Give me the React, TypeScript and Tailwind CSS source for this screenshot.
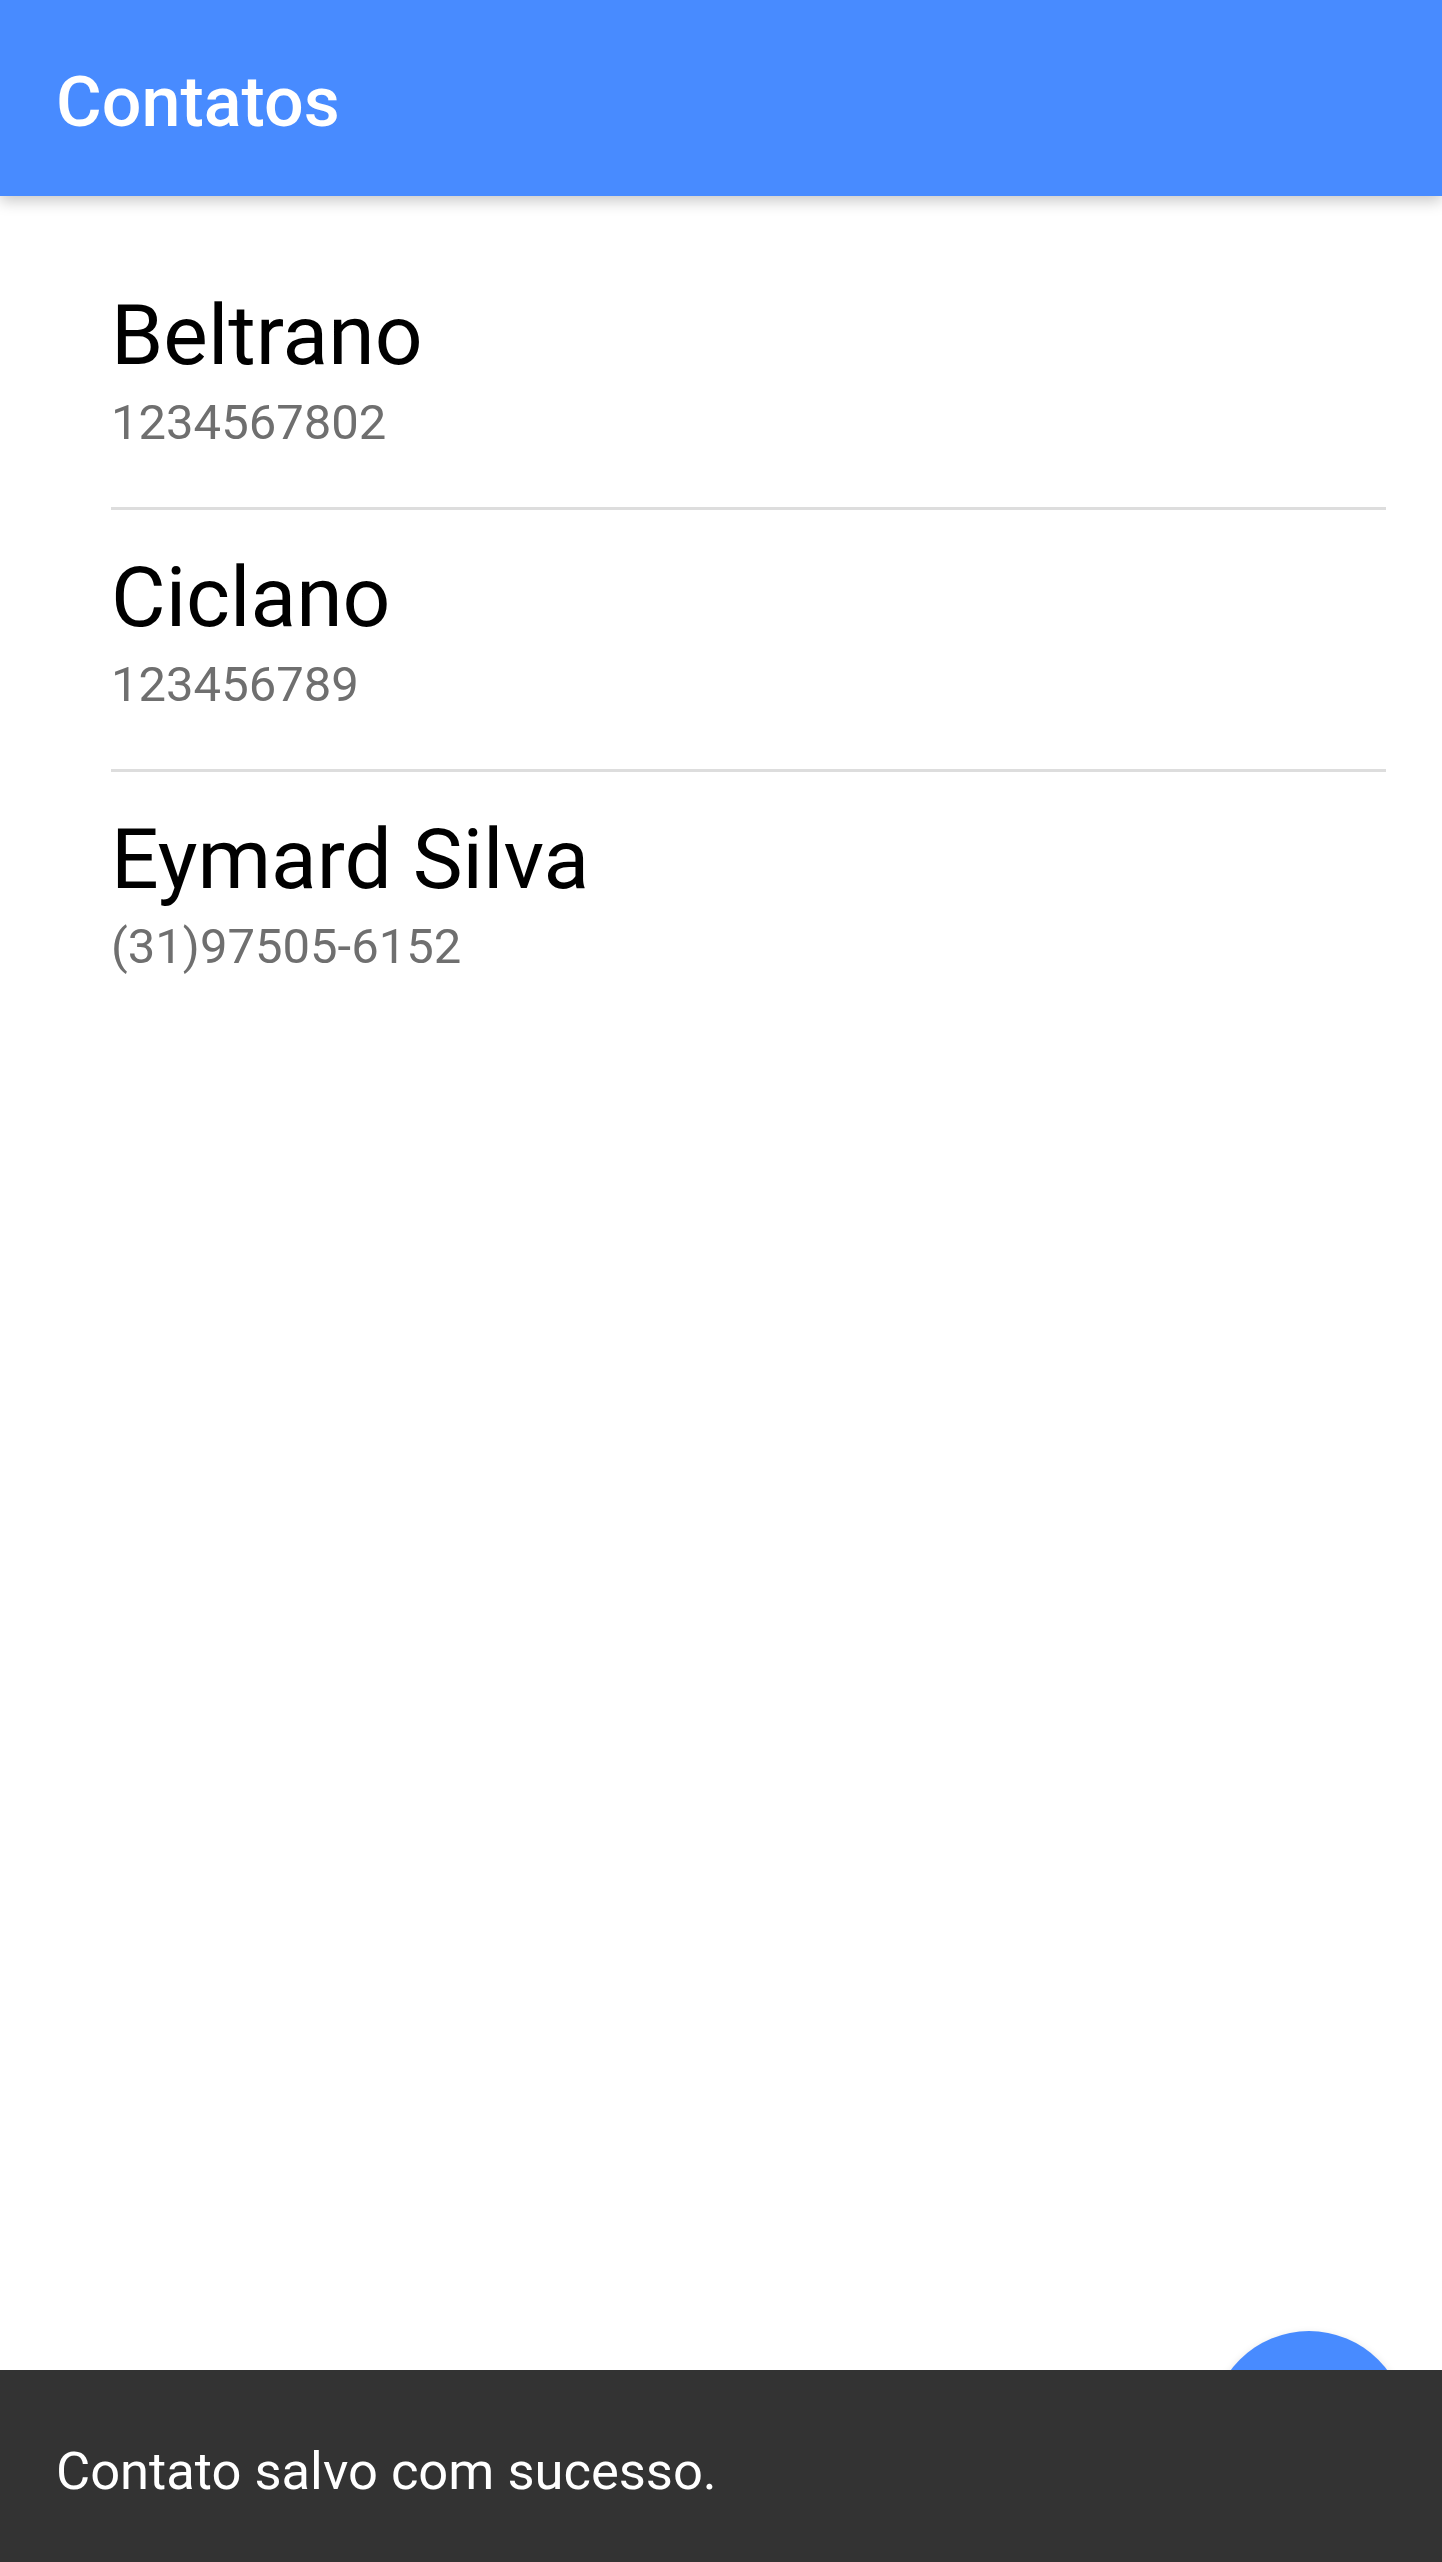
import React from "react";

type Contact = {
  name: string;
  phone: string;
};

const contacts: Contact[] = [
  { name: "Beltrano", phone: "1234567802" },
  { name: "Ciclano", phone: "123456789" },
  { name: "Eymard Silva", phone: "(31)97505-6152" },
];

const ContactRow = ({ contact, last }: { contact: Contact; last: boolean }) => {
  return (
    <li
      className={`pt-[40px] pb-[56px] ${
        last ? "" : "border-b-[3px] border-[#dddddd]"
      }`}
    >
      <p className="text-[84px] leading-[96px] text-black">{contact.name}</p>
      <p className="mt-[11px] text-[49px] leading-[56px] text-[#6f6f6f]">
        {contact.phone}
      </p>
    </li>
  );
};

const App = () => {
  return (
    <div className="relative flex h-[2562px] flex-col overflow-hidden bg-white font-['Roboto',sans-serif]">
      {/* toolbar */}
      <header className="relative z-10 h-[196px] shrink-0 bg-[#488bff] pl-[56px] pt-[62px] shadow-[0_5px_14px_rgba(0,0,0,0.22)]">
        <h1 className="text-[70px] font-medium leading-[80px] text-white">
          Contatos
        </h1>
      </header>

      <main className="flex-1 pt-[52px]">
        <ul className="ml-[111px] mr-[56px]">
          {contacts.map((c, i) => (
            <ContactRow
              key={c.name}
              contact={c}
              last={i === contacts.length - 1}
            />
          ))}
        </ul>
      </main>

      {/* fab, partly hidden by the snackbar */}
      <button className="absolute bottom-[35px] right-[35px] h-[196px] w-[196px] rounded-full bg-[#488bff] shadow-[0_4px_10px_rgba(0,0,0,0.18)]" />

      <div className="relative z-20 h-[192px] shrink-0 bg-[#333333] pl-[56px] pt-[71px]">
        <p className="text-[52.5px] leading-[60px] text-white">
          Contato salvo com sucesso.
        </p>
      </div>
    </div>
  );
};

export default App;
